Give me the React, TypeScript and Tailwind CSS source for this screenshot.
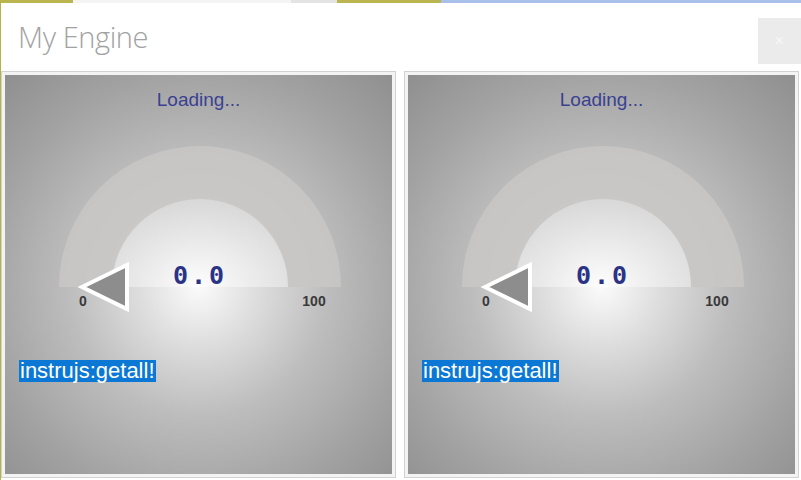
import React from "react";

function Panel() {
  return (
    <div className="flex-1 h-[407px] border border-[#d2d2d2] bg-[#f3f3f3] p-[3px]">
      <div className="relative w-full h-full bg-[radial-gradient(circle_at_50%_53%,#fbfbfb_0%,#dedede_20%,#bdbdbd_45%,#a2a2a2_75%,#8f8f8f_100%)] flex flex-col items-center overflow-hidden">
        <div className="mt-[14px] text-[19px] leading-[22px] text-[#3a4192] font-['Liberation_Sans',Arial,sans-serif]">
          Loading...
        </div>
        <svg width="385" height="200" viewBox="0 0 385 200" className="mt-[23px] shrink-0">
          <defs>
            <radialGradient id="inner" cx="50%" cy="100%" r="100%">
              <stop offset="0%" stopColor="#ffffff" />
              <stop offset="60%" stopColor="#ececec" />
              <stop offset="100%" stopColor="#dedede" />
            </radialGradient>
          </defs>
          <path
            d="M 53 153 A 141 141 0 0 1 335 153 L 282 153 A 88 88 0 0 0 106 153 Z"
            fill="#c9c7c5"
            fillOpacity="0.9"
          />
          <path d="M 106 153 A 88 88 0 0 1 282 153 Z" fill="url(#inner)" fillOpacity="0.55" />
          <polygon points="76,153 121,131 121,175" fill="#8d8d8d" stroke="#ffffff" strokeWidth="4" strokeLinejoin="miter" />
          <text x="77" y="172" textAnchor="middle" fontSize="14" fontWeight="bold" fill="#3a3a3a" fontFamily="Liberation Sans, Arial, sans-serif">0</text>
          <text x="308" y="172" textAnchor="middle" fontSize="14" fontWeight="bold" fill="#3a3a3a" fontFamily="Liberation Sans, Arial, sans-serif">100</text>
          <text x="194" y="150" textAnchor="middle" fontSize="25" fontWeight="bold" fill="#2a3386" letterSpacing="3" fontFamily="DejaVu Sans Mono, Liberation Mono, monospace">0.0</text>
        </svg>
        <div className="self-start ml-[14px] mt-[26px] bg-[#0b78d6] px-[1px] text-white text-[22px] leading-[22px] font-['Liberation_Sans',Arial,sans-serif]">
          instrujs:getall!
        </div>
      </div>
    </div>
  );
}

export default function App() {
  return (
    <div className="w-[801px] h-[480px] bg-white overflow-hidden flex flex-col border-l border-[#b7b24a]">
      <div className="flex h-[3px] shrink-0">
        <div className="w-[72px] bg-[#bab54e]" />
        <div className="w-[218px] bg-[#f4f4f4]" />
        <div className="w-[46px] bg-[#e4e4e4]" />
        <div className="w-[104px] bg-[#bab54e]" />
        <div className="flex-1 bg-[#a9c1ea]" />
      </div>
      <div className="h-[68px] shrink-0 flex items-start justify-between">
        <div className="mt-[15px] ml-[17px] text-[29px] leading-[38px] font-light text-[#a2a2a2] font-['Open_Sans',sans-serif] tracking-[-0.4px]">
          My Engine
        </div>
        <div className="mt-[15px] w-[43px] h-[46px] bg-[#ebebeb] flex items-center justify-center text-[#f7f7f7] text-[16px] font-['Liberation_Sans',sans-serif]">
          ×
        </div>
      </div>
      <div className="flex gap-[8px] pr-[2px]">
        <Panel />
        <Panel />
      </div>
    </div>
  );
}
